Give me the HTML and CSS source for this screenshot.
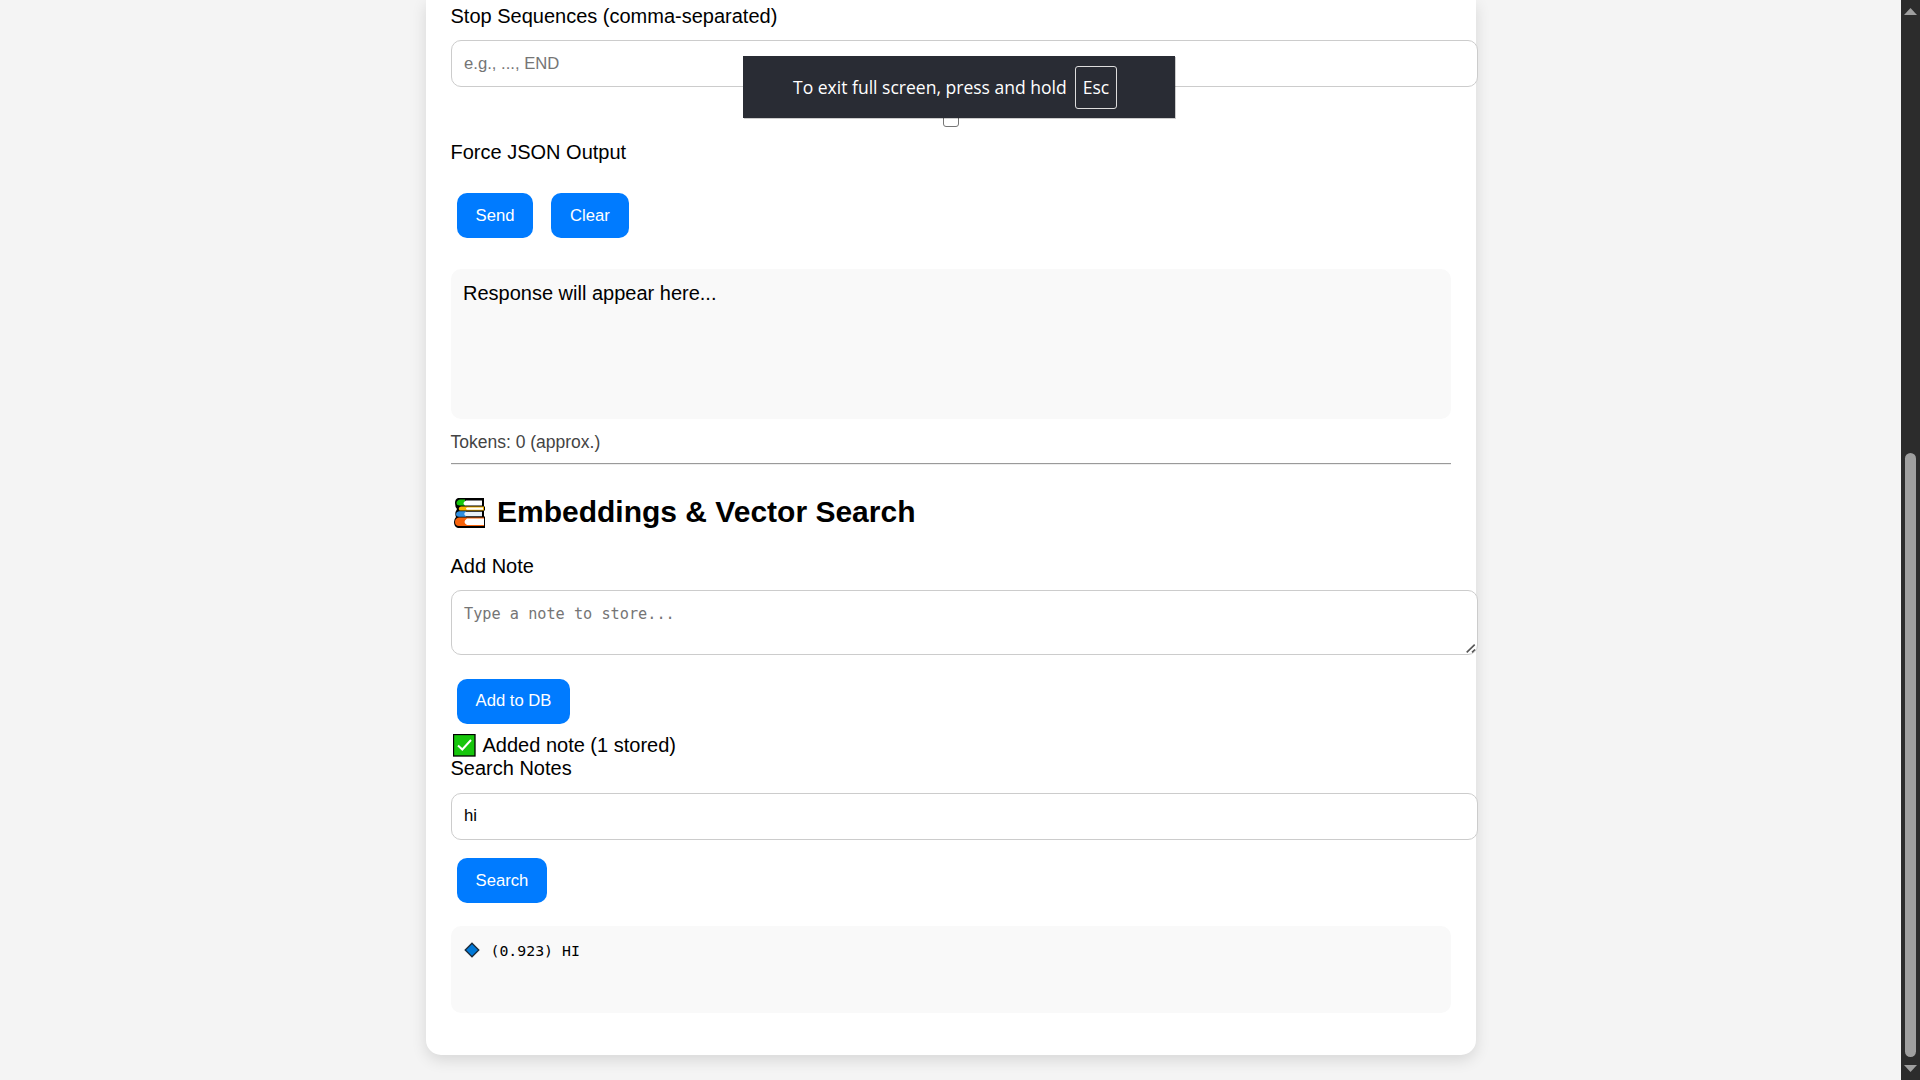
FILE: index.html
```html
<!DOCTYPE html>
<html lang="en">
<head>
<meta charset="utf-8">
<title>Embeddings &amp; Vector Search</title>
<link rel="stylesheet" href="styles.css">
</head>
<body>
<main class="page">
  <section class="card">
    <label class="label" for="stop">Stop Sequences (comma-separated)</label>
    <input class="field" id="stop" type="text" placeholder="e.g., ..., END">
    <span class="checkbox"></span>
    <label class="label">Force JSON Output</label>
    <div class="buttons buttons-main">
      <button class="btn btn-send">Send</button>
      <button class="btn btn-clear">Clear</button>
    </div>
    <div class="response">Response will appear here...</div>
    <div class="tokens">Tokens: 0 (approx.)</div>
    <hr class="rule">
    <h2 class="heading">
      <svg class="books" width="33" height="32" viewBox="0 0 33 32">
        <path d="M5 1H31V9.500H32V13.500H31V19.500H32V31H5Q1 30 1 25Q1 22 3 20Q2 18 2.500 15L4 12Q2 10 2 6Q2 2 5 1Z" fill="#000"/>
        <path d="M12 2.500H7Q3.500 3.500 3.500 6Q3.500 8.500 7 8.500H12Z" fill="#16c60c"/>
        <path d="M13 3.500H29V8.500H12Q8.500 6 13 3.500Z" fill="#fff"/>
        <path d="M31 9.500H8Q4.500 10.500 6.500 13.500H31Z" fill="#f7b500"/>
        <path d="M14 10.500H30V12.800H14Q12 11.600 14 10.500Z" fill="#fff"/>
        <path d="M13 14.300H6Q3 15 3 17Q3 19.700 6 19.700H13Z" fill="#2f8ee0"/>
        <path d="M13 14.800H29V19.200H13Q9.500 17 13 14.800Z" fill="#e8f0f8"/>
        <path d="M31 20.500H6Q2 21 2 25Q2 29 6 29H31Z" fill="#f7630c"/>
        <path d="M14 21.500H31V28H14Q9 25 14 21.500Z" fill="#fff"/>
      </svg>
      <span>Embeddings &amp; Vector Search</span>
    </h2>
    <label class="label" for="note">Add Note</label>
    <div class="note">
      <textarea class="field area" id="note" placeholder="Type a note to store..."></textarea>
      <svg class="grip" width="10" height="9" viewBox="0 0 10 9"><path d="M.7 8.300L8.700 .7M6 8.300L9 5.500" stroke="#555" stroke-width="1.600" fill="none"/></svg>
    </div>
    <div class="buttons buttons-add"><button class="btn btn-add">Add to DB</button></div>
    <div class="status">
      <svg width="23" height="23" viewBox="0 0 23 23"><rect x=".5" y=".5" width="21.500" height="21.500" fill="#16c60c" stroke="#000" stroke-width="1.300"/><path d="M5 11.500L9.300 15.500L18 6" fill="none" stroke="#fff" stroke-width="2"/></svg>
      <span>Added note (1 stored)</span>
    </div>
    <label class="label" for="query">Search Notes</label>
    <input class="field field-query" id="query" type="text" value="hi">
    <div class="buttons buttons-search"><button class="btn btn-search">Search</button></div>
    <div class="results">
      <svg width="16" height="16" viewBox="0 0 16 16"><path d="M8 1.200L14.800 8L8 14.800L1.200 8Z" fill="#0078d7" stroke="#1b2a38" stroke-width="1.300"/></svg>
      <span>(0.923) HI</span>
    </div>
  </section>
</main>
<aside class="scrollbar">
  <svg width="13" height="7" viewBox="0 0 13 7"><path d="M0 7L6.500 0L13 7Z" fill="#9f9f9f"/></svg>
  <div class="thumb"></div>
  <svg width="13" height="7" viewBox="0 0 13 7"><path d="M0 0H13L6.500 7Z" fill="#9f9f9f"/></svg>
</aside>
<div class="toast"><span class="toast-text">To exit full screen, press and hold</span><span class="key">Esc</span></div>
</body>
</html>
```
FILE: styles.css
```css
* { box-sizing: border-box; }

body {
  margin: 0;
  height: 1080px;
  display: flex;
  overflow: hidden;
  background: #f4f4f4;
  color: #000;
  font: 20px/23px "Liberation Sans", Arial, sans-serif;
}

.page {
  flex: 1;
  display: flex;
  justify-content: center;
  align-items: flex-start;
}

.card {
  width: 1050px;
  height: 1055px;
  padding: 5px 25px 0;
  display: flex;
  flex-direction: column;
  background: #fff;
  border-radius: 0 0 15px 15px;
  box-shadow: 0 5px 15px rgba(0, 0, 0, 0.12);
}

.card > * { flex-shrink: 0; }

.label { display: block; height: 23px; white-space: nowrap; }

.field {
  width: 1027px;
  height: 47px;
  margin: 12px 0 0;
  padding: 0 12.5px;
  border: 1px solid #ccc;
  border-radius: 10px;
  background: #fff;
  color: #000;
  font: 16.67px "Liberation Sans", Arial, sans-serif;
  outline: none;
}

.field::placeholder { color: #757575; }

.field-query { margin-top: 13px; padding-bottom: 2px; }

.checkbox {
  width: 16px;
  height: 16px;
  margin: 24px 0 14px;
  align-self: center;
  border: 1px solid #767676;
  border-radius: 3px;
}

.buttons { display: flex; padding-left: 6px; }
.buttons-main { gap: 18px; margin-top: 29px; }
.buttons-add { margin-top: 24px; }
.buttons-search { margin-top: 18px; }

.btn {
  height: 45px;
  padding: 0 0 0 1px;
  border: 0;
  border-radius: 10px;
  background: #007bff;
  color: #fff;
  font: 16.67px "Liberation Sans", Arial, sans-serif;
}

.btn-send { width: 76px; }
.btn-clear { width: 78px; }
.btn-add { width: 113px; padding-bottom: 2px; }
.btn-search { width: 90px; }

.response {
  height: 150px;
  margin-top: 31px;
  padding: 13px 12.5px;
  border-radius: 10px;
  background: #f9f9f9;
}

.tokens {
  height: 21px;
  margin-top: 13px;
  color: #444;
  font-size: 17.5px;
  line-height: 21px;
}

.rule {
  width: 1000px;
  height: 2px;
  margin: 10px 0 0;
  border: 0;
  border-top: 1px solid #9a9a9a;
  border-bottom: 1px solid #eee;
}

.heading {
  display: flex;
  align-items: center;
  height: 34px;
  margin: 30px 0 26px;
  padding-left: 2px;
  gap: 11.5px;
  font-size: 30px;
  line-height: 34px;
}

.books { margin-top: 1px; }

.note { position: relative; width: 1027px; height: 77px; }

.area {
  display: block;
  height: 65px;
  padding: 14px 12.5px 12px;
  resize: none;
  overflow: hidden;
  font: 15.23px/19px "DejaVu Sans Mono", monospace;
}

.note .area { position: relative; top: 12px; margin: 0; }

.grip { position: absolute; right: 2px; bottom: 2px; }

.status {
  display: flex;
  align-items: center;
  height: 23px;
  margin: 10px 0 0;
  padding-left: 2px;
  gap: 7px;
}

.results {
  display: flex;
  height: 87px;
  margin-top: 23px;
  padding: 16px 13.5px;
  gap: 10.5px;
  border-radius: 10px;
  background: #f9f9f9;
  font: 14.85px/18px "DejaVu Sans Mono", monospace;
}

.scrollbar {
  width: 19px;
  height: 1080px;
  padding: 8px 0;
  display: flex;
  flex-direction: column;
  align-items: center;
  background: #2c2c2c;
}

.thumb {
  width: 11px;
  height: 604px;
  margin: 438px 0 8px;
  border-radius: 6px;
  background: #9f9f9f;
}

.toast {
  position: absolute;
  left: 743px;
  top: 56px;
  width: 432px;
  height: 62px;
  display: flex;
  align-items: center;
  padding-left: 50px;
  background: #292c34;
  box-shadow: 1px 1px 0 rgba(0, 0, 0, 0.2);
  color: #fff;
  font: 17.55px/24px "Open Sans", sans-serif;
  white-space: nowrap;
}

.toast-text { width: 282px; }

.key {
  width: 42px;
  height: 43px;
  border: 1px solid #ddd;
  border-radius: 3px;
  line-height: 40px;
  text-align: center;
}
```
